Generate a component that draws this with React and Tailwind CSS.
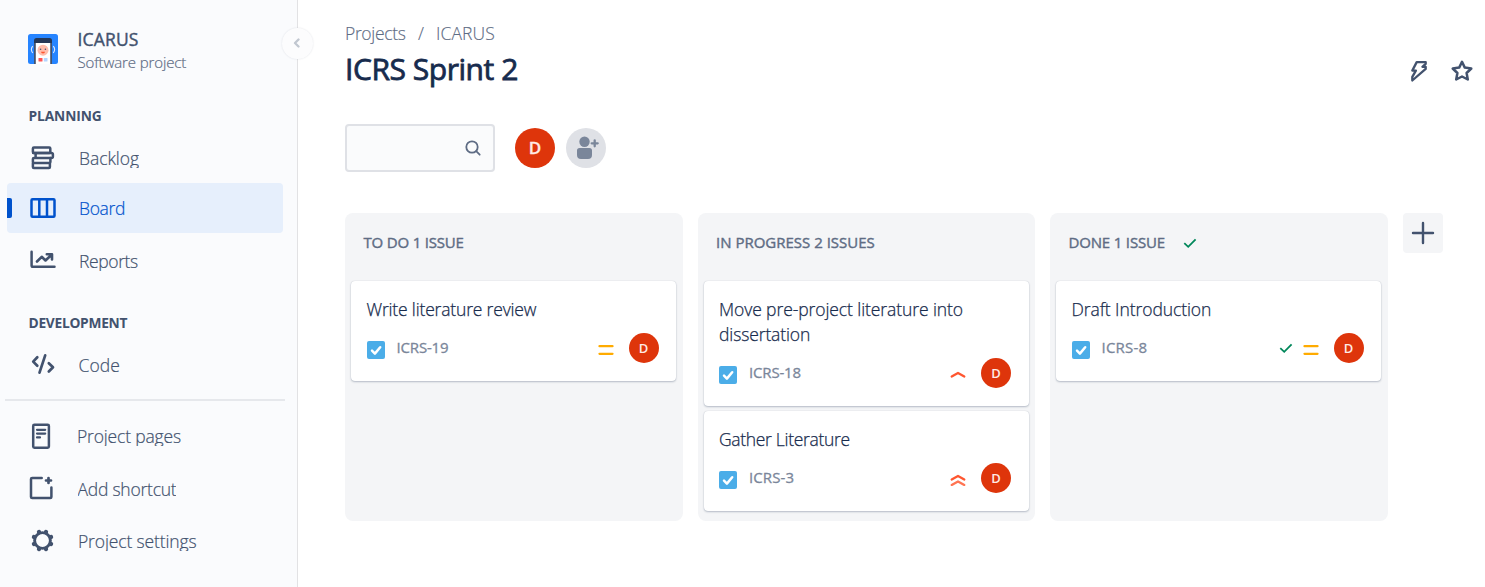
import React from "react";

const Svg = ({ size = 30, className = "", children }) => (
  <svg width={size} height={size} viewBox={`0 0 ${size} ${size}`} fill="none" stroke="currentColor" strokeWidth="2.5" strokeLinecap="round" strokeLinejoin="round" className={`block shrink-0 ${className}`}>
    {children}
  </svg>
);

const BacklogIcon = () => (
  <Svg>
    <rect x="4.9" y="4.5" width="17.4" height="5.4" rx="1" />
    <rect x="7.600" y="9.900" width="17.300" height="5" rx="1.500" />
    <path d="M8 9.900H5.200M8 14.900H5.900a1 1 0 0 0-1 1v3.200a1 1 0 0 0 1 1h15.500a1 1 0 0 0 1-1v-4.200M4.900 20.100v3.800a1 1 0 0 0 1 1h15a1 1 0 0 0 1-1v-3.800" />
  </Svg>
);

const BoardIcon = () => (
  <Svg>
    <rect x="3.500" y="6.300" width="23" height="17.500" rx="1" />
    <path d="M11.300 6.500v17M19 6.500v17" strokeLinecap="butt" />
  </Svg>
);

const ReportsIcon = () => (
  <Svg>
    <path d="M3.600 5.800v13.700a1.300 1.300 0 0 0 1.300 1.300H26.500" />
    <path d="M9 15.500l4.700-4.700 3.800 3.700 6-5.700M18.800 8.200h5.200v5.200" strokeWidth="2.600" />
  </Svg>
);

const CodeIcon = () => (
  <Svg>
    <path d="M9.300 7.300L5.200 11.600l4.100 4.200M20.800 13.200l4.200 4-4.200 4.300M17.200 5.300L11.500 22.600" strokeWidth="2.700" />
  </Svg>
);

const PagesIcon = () => (
  <Svg>
    <rect x="5.200" y="3.700" width="15.700" height="23" rx="1.200" />
    <path d="M9 8.800h8.200M9 12.600h8.200M9 16.400h3" strokeWidth="2.200" />
  </Svg>
);

const ShortcutIcon = () => (
  <Svg>
    <path d="M13.700 3.900H4.200a1.200 1.200 0 0 0-1.200 1.200v17.800a1.200 1.200 0 0 0 1.200 1.200h18a1.200 1.200 0 0 0 1.200-1.200V13.500" />
    <path d="M20.500 4v5M18 6.500h5" strokeWidth="2.700" />
  </Svg>
);

const TEETH = [22.5, 67.5, 112.5, 157.5, 202.5, 247.5, 292.5, 337.5];
const GearIcon = () => (
  <Svg>
    <circle cx="14.500" cy="14.500" r="7.900" strokeWidth="2.900" />
    {TEETH.map((a) => (
      <path key={a} d="M14.500 5.600V5.200" strokeWidth="4.200" transform={`rotate(${a} 14.500 14.500)`} />
    ))}
  </Svg>
);

const Logo = () => (
  <svg width="30" height="30" viewBox="0 0 30 30" className="block shrink-0">
    <rect width="30" height="30" rx="2.500" fill="#2684ff" />
    <path d="M6 30V6.500A2.500 2.500 0 0 1 8.500 4h13A2.500 2.500 0 0 1 24 6.500V30Z" fill="#253858" />
    <path d="M7.500 9h15v21h-15z" fill="#fff" />
    <path d="M6 9h1.500v21H6zM22.500 9H24v21h-1.500z" fill="#42526e" />
    <circle cx="15" cy="16.200" r="5.500" fill="#ffbdad" />
    <circle cx="12.600" cy="15.300" r=".8" fill="#42526e" />
    <circle cx="17.400" cy="15.300" r=".8" fill="#42526e" />
    <path d="M13 17.700h4a2 1.800 0 0 1-4 0z" fill="#ff5630" />
    <rect x="10.500" y="24" width="4" height="3.500" rx=".5" fill="#ff5252" />
    <rect x="15.800" y="24" width="3.700" height="3.500" rx=".5" fill="#b3d4ff" />
    <path d="M4.700 12.200a5.500 5.500 0 0 0 0 6.800M25.300 12.200a5.500 5.500 0 0 1 0 6.800" fill="none" stroke="#deebff" strokeWidth="1.100" />
  </svg>
);

const Check = ({ className = "" }) => (
  <svg width="14" height="12" viewBox="0 0 14 12" fill="none" stroke="#00875a" strokeWidth="1.800" className={`block shrink-0 ${className}`}>
    <path d="M1.300 6.200L5.200 9.800 12.600 2.300" />
  </svg>
);

const Priority = ({ level }) => (
  <svg width="16" height="16" viewBox="0 0 16 16" fill="none" strokeWidth="2.300" strokeLinecap="round" strokeLinejoin="round" className="relative top-[2px] block shrink-0">
    {level === "medium" && <path d="M1.500 4.200h13M1.500 11.800h13" stroke="#ffab00" />}
    {level === "high" && <path d="M1.700 9.500L8 6l6.300 3.500" stroke="#ff5630" />}
    {level === "highest" && (
      <>
        <path d="M1.700 12.900L8 9.400l6.300 3.500" stroke="#ff7452" />
        <path d="M1.700 7.500L8 4l6.300 3.500" stroke="#ff5630" />
      </>
    )}
  </svg>
);

const TaskIcon = () => (
  <svg width="18" height="18" viewBox="0 0 18 18" className="relative top-[2px] block shrink-0">
    <rect width="18" height="18" rx="2" fill="#4bade8" />
    <path d="M5 9.700l2.900 2.900 5.300-6.400" fill="none" stroke="#fff" strokeWidth="2.500" strokeLinecap="round" strokeLinejoin="round" />
  </svg>
);

const NavItem = ({ icon, label, active, className = "", textClass = "" }) => (
  <div className={`flex h-[50px] items-center ${active ? "bg-[#e6effc] text-[#0052cc]" : "text-[#42526e]"} ml-[7px] w-[276px] rounded-[4px] ${className}`}>
    <span className={`-mr-[5px] h-5 w-[5px] rounded-r-[2px] ${active ? "bg-[#0052cc]" : ""}`} />
    <span className="ml-[21px] w-[51px]">{icon}</span>
    <span className={`h-5 overflow-hidden text-[17.5px] leading-5 font-light whitespace-nowrap [-webkit-text-stroke:0.2px] ${textClass}`}>{label}</span>
  </div>
);

const Card = ({ title, id, idClass = "", titleClass = "", level, done }) => (
  <div className="rounded-[4px] bg-white pt-4 pr-[17.5px] pb-[18px] pl-[15.5px] shadow-[0_1px_2px_rgba(9,30,66,0.25),0_0_1px_rgba(9,30,66,0.2)]">
    <div className={`text-[17.5px] leading-[25px] font-light whitespace-nowrap text-[#172b4d] [-webkit-text-stroke:0.25px] ${titleClass}`}>{title}</div>
    <div className="mt-[11px] flex h-[30px] items-center">
      <TaskIcon />
      <span className={`relative -top-px ml-[12px] h-5 text-[15px] leading-5 whitespace-nowrap text-[#7a869a] [-webkit-text-stroke:0.3px] ${idClass}`}>{id}</span>
      <span className="grow" />
      {done && <Check className="mr-[10px]" />}
      <Priority level={level} />
      <span className="ml-[15px] flex h-[30px] w-[30px] items-center justify-center rounded-full bg-[#de350b] text-[13px] leading-none font-semibold text-[#ffebe6]">D</span>
    </div>
  </div>
);

const Column = ({ title, titleClass = "", done, children }) => (
  <section className="h-[308px] w-[337.5px] rounded-[8px] bg-[#f4f5f7] pt-[19px] pr-[6.5px] pl-[6px]">
    <div className="flex h-5 items-center pl-[12.5px]">
      <h2 className={`text-[15px] leading-5 whitespace-nowrap text-[#5e6c84] [-webkit-text-stroke:0.4px] ${titleClass}`}>{title}</h2>
      {done && <Check className="relative top-px ml-[18px]" />}
    </div>
    <div className="mt-[29px] flex flex-col gap-[5px]">{children}</div>
  </section>
);

export default function App() {
  return (
    <div className="flex h-[587px] w-[1485px] overflow-hidden bg-white font-['Open_Sans',sans-serif]">
      <aside className="relative w-[298px] shrink-0 border-r border-[#e2e2e4] bg-[#fafbfd]">
        <div className="absolute top-[28px] left-[282px] flex h-[31px] w-[31px] items-center justify-center rounded-full bg-[#fcfcfd] text-[#c1c7d0] shadow-[0_0_2px_rgba(9,30,66,0.12)]">
          <svg width="8" height="10" viewBox="0 0 8 10" fill="none" stroke="currentColor" strokeWidth="2.300" strokeLinecap="round" strokeLinejoin="round" className="mr-[2px] -mt-px"><path d="M5.500 1.500L2 5l3.500 3.500" /></svg>
        </div>
        <div className="flex pt-[29px] pl-[28px]">
          <div className="mt-[5px]"><Logo /></div>
          <div className="ml-[19.5px]">
            <div className="h-5 text-[17.5px] leading-5 tracking-[0.15px] text-[#42526e] [-webkit-text-stroke:0.4px]">ICARUS</div>
            <div className="mt-[3px] h-5 text-[15px] leading-5 font-light tracking-[-0.12px] text-[#5e6c84] [-webkit-text-stroke:0.2px]">Software project</div>
          </div>
        </div>
        <h3 className="mt-[34px] h-5 pl-[28.5px] text-[13.75px] leading-5 font-bold tracking-[-0.1px] text-[#42526e]">PLANNING</h3>
        <nav className="mt-[7px]">
          <NavItem icon={<BacklogIcon />} label="Backlog" textClass="tracking-[-0.04px]" />
          <NavItem icon={<BoardIcon />} label="Board" active textClass="tracking-[-0.33px]" />
          <NavItem icon={<ReportsIcon />} label="Reports" className="mt-[3px]" textClass="tracking-[-0.39px]" />
        </nav>
        <h3 className="mt-[27px] h-5 pl-[28.5px] text-[13.75px] leading-5 font-bold tracking-[-0.27px] text-[#42526e]">DEVELOPMENT</h3>
        <NavItem icon={<CodeIcon />} label="Code" className="mt-[7px]" textClass="-ml-[0.5px] tracking-[0.1px]" />
        <div className="mt-[9px] ml-[5px] h-[2px] w-[280px] bg-[#e6e8ec]" />
        <NavItem icon={<PagesIcon />} label="Project pages" className="mt-[10px]" textClass="-ml-[2px] tracking-[-0.17px]" />
        <NavItem icon={<ShortcutIcon />} label="Add shortcut" className="mt-[3px]" textClass="-ml-[1.5px] tracking-[-0.24px]" />
        <NavItem icon={<GearIcon />} label="Project settings" className="mt-[2px]" textClass="-ml-[1px] tracking-[-0.13px]" />
      </aside>

      <main className="flex grow flex-col pt-[23px] pl-[47px]">
        <div className="flex h-5 text-[17.5px] leading-5 font-light text-[#5e6c84] [-webkit-text-stroke:0.15px]">
          <span className="w-[73px] tracking-[-0.34px]">Projects</span>
          <span className="w-[18px]">/</span>
          <span className="tracking-[0.1px]">ICARUS</span>
        </div>
        <div className="mt-[5px] flex h-10 justify-between">
          <h1 className="mt-px text-[30px] leading-10 tracking-[-0.45px] text-[#172b4d] [-webkit-text-stroke:0.8px]">ICRS Sprint 2</h1>
          <div className="mt-[8px] mr-[8px] flex gap-[13px] text-[#42526e]">
            <Svg>
              <path d="M12.700 6.100L8.300 14.600h3.600L8.300 20.900v3.600L21.700 12.900V10.800h-3.300l3.300-3V6.100z" strokeWidth="2.300" />
            </Svg>
            <Svg>
              <path d="M15 5.800l2.800 5.800 6.500.9-4.700 4.500 1.200 6.500-5.800-3-5.800 3 1.200-6.500-4.700-4.500 6.500-.9z" strokeWidth="2.500" />
            </Svg>
          </div>
        </div>
        <div className="mt-[36px] flex h-12 items-center">
          <div className="flex h-12 w-[150px] items-center justify-end rounded-[4px] border-2 border-[#dfe1e6] bg-[#fafbfc] pr-[11px] text-[#5e6c84]">
            <svg width="18" height="18" viewBox="0 0 18 18" fill="none" stroke="currentColor" strokeWidth="1.800" strokeLinecap="round"><circle cx="8" cy="8" r="5.700" /><path d="M12.200 12.200l3.500 3.500" /></svg>
          </div>
          <div className="ml-5 flex h-10 w-10 items-center justify-center rounded-full bg-[#de350b] pb-px text-[17px] leading-none font-semibold text-[#ffebe6] [-webkit-text-stroke:0.3px]">D</div>
          <div className="ml-[11px] h-10 w-10 rounded-full bg-[#dfe1e6]">
            <svg width="40" height="40" viewBox="0 0 40 40" fill="#7a869a">
              <circle cx="18.500" cy="13.700" r="5.200" />
              <path d="M11 22.500a2.500 2.500 0 0 1 2.500-2.500h10a2.500 2.500 0 0 1 2.500 2.500v4.500a4 4 0 0 1-4 4h-7a4 4 0 0 1-4-4z" />
              <path d="M28.700 12.300v6M25.700 15.300h6" stroke="#7a869a" strokeWidth="2.300" strokeLinecap="round" />
            </svg>
          </div>
        </div>
        <div className="mt-[41px] flex gap-[15px]">
          <Column title="TO DO 1 ISSUE" titleClass="tracking-[-0.19px]">
            <Card title="Write literature review" titleClass="tracking-[-0.17px]" id="ICRS-19" idClass="tracking-[-0.17px]" level="medium" />
          </Column>
          <Column title="IN PROGRESS 2 ISSUES">
            <Card title={<>Move pre-project literature into<br /><span className="tracking-[-0.12px]">dissertation</span></>} titleClass="tracking-[-0.09px]" id="ICRS-18" idClass="tracking-[-0.17px]" level="high" />
            <Card title="Gather Literature" titleClass="tracking-[-0.32px]" id="ICRS-3" idClass="tracking-[0.1px]" level="highest" />
          </Column>
          <Column title="DONE 1 ISSUE" titleClass="tracking-[-0.17px]" done>
            <Card title="Draft Introduction" titleClass="tracking-[-0.08px]" id="ICRS-8" idClass="tracking-[0.2px]" level="medium" done />
          </Column>
          <button className="flex h-10 w-10 items-center justify-center rounded-[4px] bg-[#f4f5f7] text-[#42526e]">
            <Svg size={24}><path d="M12 2v20M2 12h20" strokeWidth="2.400" /></Svg>
          </button>
        </div>
      </main>
    </div>
  );
}
